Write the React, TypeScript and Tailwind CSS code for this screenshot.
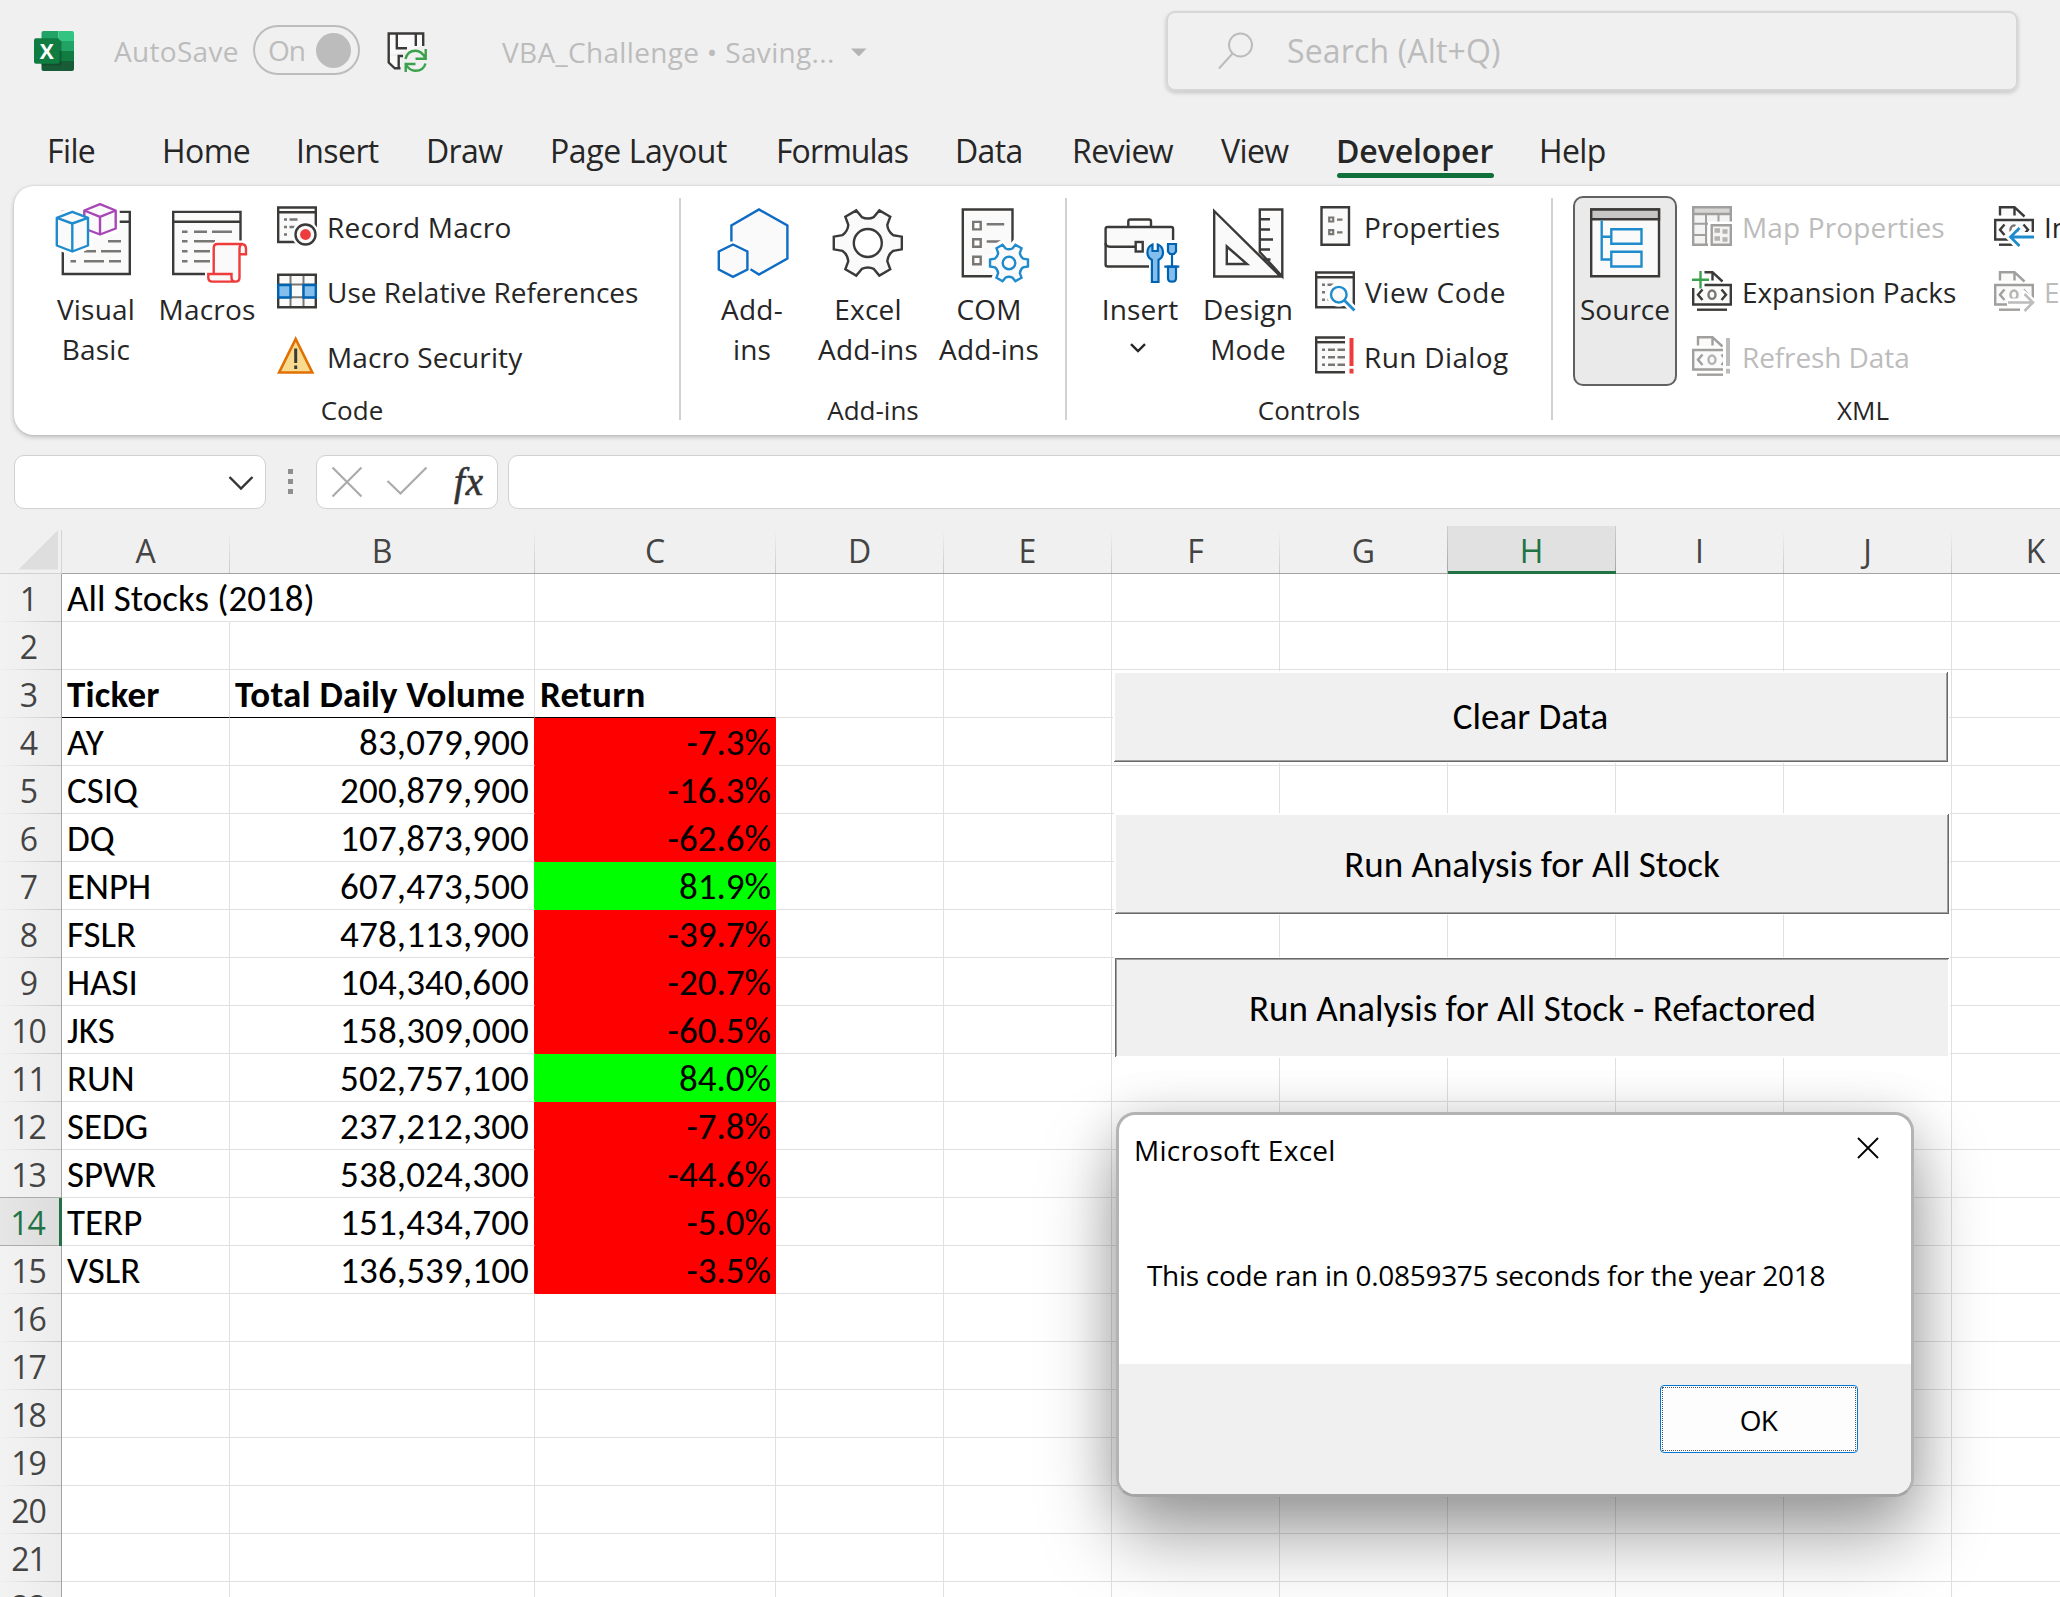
import React from "react";

const INK = "#3b3a39";
const GRAY = "#797774";
const BLUE = "#1e8bcd";
const DEEP = "#0063b1";
const SKY = "#83beec";
const RED = "#ee3b3b";
const PAPER = "#fafafa";

/* ---------- Ribbon icons ---------- */

type Box = { box: string; children: React.ReactNode };

function BigIcon({ box, children }: Box) {
  return (
    <svg viewBox={box} className="h-[90px] w-full" fill="none" stroke={INK} strokeWidth="2.4">
      {children}
    </svg>
  );
}

function SmallIcon({ box, children }: Box) {
  return (
    <svg viewBox={box} className="h-[65px] w-[54px] shrink-0" fill="none" stroke={INK} strokeWidth="2.4">
      {children}
    </svg>
  );
}

function gearPath(cx: number, cy: number, outer: number) {
  const at = (r: number, deg: number) => {
    const a = (deg * Math.PI) / 180;
    return `${(cx + r * Math.cos(a)).toFixed(2)} ${(cy + r * Math.sin(a)).toFixed(2)}`;
  };
  let d = "";
  for (let i = 0; i < 6; i++) {
    const t = i * 60;
    d += `${i ? "L" : "M"}${at(outer * 0.77, t - 17)} L${at(outer, t - 10.5)} L${at(outer, t + 10.5)} L${at(outer * 0.77, t + 17)} Q${at(outer * 0.67, t + 30)} ${at(outer * 0.77, t + 43)} `;
  }
  return d + "Z";
}

function VisualBasicIcon() {
  return (
    <BigIcon box="46 199 100 90">
      <path d="M62.800 211.900H129.800V274H62.800Z" fill={PAPER} />
      <path d="M62.800 221.800H129.800" />
      <path d="M108 241.300h13M84 251.300h12M101 251.300h20M70.500 261.300h5.500M84 261.300h20M109 261.300h12" stroke={GRAY} />
      <g stroke="#fff" strokeWidth="8" fill="#fff">
        <path d="M100 204.200L115.700 210.500V229L100 235L84.300 229V210.500Z" />
        <path d="M72.300 211.500L88 217.500V245.500L72.300 251.500L56.600 245.500V217.500Z" />
      </g>
      <g strokeWidth="2.4" strokeLinejoin="round">
        <path d="M100 204.200L115.700 210.500V228.500L100 234.500L84.300 228.500V210.500Z" fill={PAPER} stroke="#a846b8" />
        <path d="M84.300 210.500L100 216.800L115.700 210.500M100 216.800V234.500" stroke="#a846b8" />
        <path d="M72.300 211.800L88 217.800V245.500L72.300 251.500L56.800 245.500V217.800Z" fill={PAPER} stroke={BLUE} />
        <path d="M56.800 217.800L72.300 223.500L88 217.800M72.300 223.500V251.500" stroke={BLUE} />
      </g>
    </BigIcon>
  );
}

function MacrosIcon() {
  return (
    <BigIcon box="157 199 100 90">
      <path d="M173.200 211.900H240.500V274H173.200Z" fill={PAPER} />
      <path d="M173.200 221.800H240.500" />
      <path d="M182 231.700h5.500M194 231.700h13M212 231.700h20M182 241.300h5.500M194 241.300h21M182 251.300h5.500M194 251.300h16M182 261.300h5.500M194 261.300h16" stroke={GRAY} />
      <path d="M216 240.500H246V256H243V285H205V271H210.500V246Z" fill="#fff" stroke="none" />
      <path d="M213.700 274V248Q213.700 244 217.500 244H241.500Q246 244 246 249V254.200H239.500V277.500Q239.500 281.600 235.500 281.600H212.500Q208.300 281.600 208.300 277.500V274H231.500V277.500Q231.500 281.600 235.500 281.600M239.500 254V249Q239.500 244 243 244" fill={PAPER} stroke={RED} />
    </BigIcon>
  );
}

function AddInsIcon() {
  return (
    <BigIcon box="696 199 112 90">
      <path d="M731.400 242V225.500L759 209.500L787.400 225.500V258.500L759 274.500L750.500 269.500V249L733 240Z" fill={PAPER} stroke="none" />
      <path d="M731.400 241.500V225.500L759 209.500L787.400 225.500V258.500L759 274.500L750.500 269.300" stroke="#0f6cc4" />
      <path d="M733 244.500L747.400 251.500V269.500L733 276.800L718.800 269.500V251.500Z" fill={PAPER} stroke="#0f6cc4" />
    </BigIcon>
  );
}

function ExcelAddInsIcon() {
  return (
    <BigIcon box="808 199 120 90">
      <path d={gearPath(867.8, 243, 34.6)} fill={PAPER} />
      <circle cx="867.800" cy="243" r="14" fill="#fff" />
    </BigIcon>
  );
}

function ComAddInsIcon() {
  return (
    <BigIcon box="929 199 120 90">
      <path d="M962.800 209.500H1012.500V276.200H962.800Z" fill={PAPER} />
      <g stroke={GRAY} fill="#fff">
        <path d="M973.200 221.900h7.500v7.500h-7.500zM973.200 239.300h7.500v7.500h-7.500zM973.200 256.800h7.500v7.500h-7.500z" />
        <path d="M986.700 224.200h17.500M986.700 241.500h14" />
      </g>
      <path d={gearPath(1009, 263, 19.5)} fill="#fff" stroke="#fff" strokeWidth="9" />
      <path d={gearPath(1009, 263, 19.3)} fill={PAPER} stroke={BLUE} />
      <circle cx="1009" cy="263" r="6.300" fill="#fff" stroke={BLUE} />
    </BigIcon>
  );
}

function InsertIcon() {
  return (
    <BigIcon box="1090 199 100 90">
      <rect x="1105.600" y="227" width="67.500" height="39.500" rx="2" fill={PAPER} />
      <path d="M1128.300 226.500V221.500Q1128.300 219.500 1130.300 219.500H1149Q1151 219.500 1151 221.500V226.500" />
      <path d="M1105.600 243Q1105.600 246.700 1110 246.700H1135" />
      <path d="M1149 240H1180V285H1149Z" fill="#fff" stroke="none" />
      <rect x="1135.700" y="242" width="7" height="9.500" fill="#fff" />
      <g stroke={DEEP} fill={SKY} strokeWidth="2.200">
        <path d="M1152.500 244.500V251H1157.800V244.500Q1163 246.500 1163 252.500Q1163 257.500 1158.500 260V282H1151.900V260Q1147.400 257.500 1147.400 252.500Q1147.400 246.500 1152.500 244.500Z" />
        <path d="M1168 244h8v7.500l-2 2.500h-4l-2-2.500zM1168 266.700h8v11.500q0 3.500-4 3.500t-4-3.500z" />
        <path d="M1172 254V266.700M1164.300 266.700H1179.300" />
      </g>
    </BigIcon>
  );
}

function DesignModeIcon() {
  return (
    <BigIcon box="1198 199 100 90">
      <path d="M1259.800 209.500H1282.300V276.500L1259.800 252Z" fill={PAPER} />
      <path d="M1260 219.300h10M1260 229.500h10M1260 239.500h13M1260 249.500h10M1262 259.500h8.500" />
      <path d="M1214.200 211V276.500H1280.500Z" fill={PAPER} />
      <path d="M1226.800 246.500V264H1247Z" fill="#fff" />
    </BigIcon>
  );
}

function SourceIcon() {
  return (
    <svg viewBox="1575 198 100 91" className="h-[91px] w-full shrink-0" fill="none" stroke={INK} strokeWidth="2.4">
      <path d="M1591.200 209.500H1659V276.300H1591.200Z" fill={PAPER} />
      <path d="M1591.200 209.500H1659V219.300H1591.200Z" fill="#c8c6c4" />
      <path d="M1601.700 220.500V259.500H1611M1601.700 236.700H1611" stroke={BLUE} />
      <path d="M1611.300 229.300h30.200v14.500h-30.200zM1611.300 251.700h30.200v14.800h-30.200z" stroke={BLUE} fill={PAPER} />
    </svg>
  );
}

function RecordIcon() {
  return (
    <SmallIcon box="272 195 54 65">
      <path d="M278.200 207.500H315.800V242H278.200Z" fill={PAPER} />
      <path d="M278.200 212.300H315.800" />
      <path d="M284 219.500h3M289.500 219.500h8M284 227h3M289.500 227h5M284 234.500h3" stroke={GRAY} />
      <circle cx="305.500" cy="234.500" r="13.500" fill="#fff" stroke="none" />
      <path d="M300 240.500h18v6h-18z" fill="#fff" stroke="none" />
      <circle cx="305.500" cy="234.500" r="10" fill={PAPER} />
      <circle cx="305.500" cy="234.500" r="5.400" fill={RED} stroke="none" />
    </SmallIcon>
  );
}

function RelativeIcon() {
  return (
    <SmallIcon box="272 260 54 65">
      <path d="M278.200 274.700H315.800V307.300H278.200Z" fill={PAPER} stroke="none" />
      <path d="M290.500 274.700V307.300M303.500 274.700V307.300M278.200 284.500H315.800M278.200 297.300H315.800" stroke={GRAY} strokeWidth="2" />
      <path d="M278.200 274.700H315.800V307.300H278.200Z" />
      <path d="M278.200 285h12.300v12.500h-12.300zM303.500 285h12.300v12.500h-12.300z" fill={SKY} stroke={DEEP} />
    </SmallIcon>
  );
}

function SecurityIcon() {
  return (
    <SmallIcon box="272 325 54 65">
      <path d="M295.700 339L312.300 372.500H279.100Z" fill="#f8db8f" stroke="#e07000" strokeWidth="2.600" />
      <path d="M295.700 348.500V363M295.700 365.500V369" strokeWidth="3" />
    </SmallIcon>
  );
}

function PropertiesIcon() {
  return (
    <SmallIcon box="1309 195 54 65">
      <path d="M1321.500 207.200H1349V244.800H1321.500Z" fill={PAPER} />
      <path d="M1329.200 217.500h4v4h-4zM1329.200 230.200h4v4h-4zM1337 219.700h5.500M1337 232.300h5.500" stroke={GRAY} strokeWidth="2.200" />
    </SmallIcon>
  );
}

function ViewCodeIcon() {
  return (
    <SmallIcon box="1309 260 54 65">
      <path d="M1316.200 272.500H1353.800V307.200H1316.200Z" fill={PAPER} />
      <path d="M1316.200 277.300H1353.800" />
      <path d="M1322 284.700h3M1327.500 284.700h6M1322 292.300h3M1322 299.700h3M1327.500 299.700h2" stroke={GRAY} />
      <circle cx="1338.800" cy="294.700" r="12" fill="#fff" stroke="none" />
      <path d="M1344 300L1356 312" stroke="#fff" strokeWidth="8" />
      <circle cx="1338.800" cy="294.700" r="7.800" fill={PAPER} stroke={BLUE} />
      <path d="M1344.300 300.300L1354.500 310.500" stroke={BLUE} strokeWidth="2.800" />
    </SmallIcon>
  );
}

function RunDialogIcon() {
  return (
    <SmallIcon box="1309 325 54 65">
      <path d="M1345 337.500H1316.200V372.200H1345" fill={PAPER} />
      <path d="M1316.200 342.200H1345" />
      <path d="M1322 349.700h3M1328 349.700h7M1337.500 349.700h7.500M1322 357.300h3M1328 357.300h7M1337.500 357.300h7.500M1322 364.800h3M1328 364.800h7M1337.500 364.800h7.500" stroke={GRAY} />
      <path d="M1351.500 338V366M1351.500 368.700V373.500" stroke={RED} strokeWidth="4" />
    </SmallIcon>
  );
}

function MapPropertiesIcon() {
  return (
    <SmallIcon box="1687 195 54 65">
      <g stroke="#a19f9d">
        <path d="M1693.200 207.200H1730.800V244.800H1693.200Z" fill="#f3f3f3" />
        <path d="M1693.200 207.200H1730.800V214H1693.200Z" fill="#d6d6d6" />
        <path d="M1706 214V245M1718.500 214V224M1693.200 223.700H1731M1693.200 235H1706" strokeWidth="2" />
      </g>
      <path d="M1708 221.500h26v26h-26z" fill="#fff" stroke="none" />
      <path d="M1711.700 225.200H1730.800V244.800H1711.700Z" stroke="#a19f9d" fill="#f3f3f3" />
      <path d="M1714.500 230.500h5.500M1722.500 231.500h5M1714.500 238.500h5.500M1722.500 239.500h5" stroke="#b5b3b1" strokeWidth="4.500" />
    </SmallIcon>
  );
}

type XmlProps = { box: string; x: number; y: number; ink: string; soft: string; children?: React.ReactNode };

function XmlDocIcon({ box, x, y, ink, soft, children }: XmlProps) {
  return (
    <SmallIcon box={box}>
      <g transform={`translate(${x} ${y})`} stroke={ink}>
        <path d="M6 9.500V1.200H20.500L30.500 10.500M20.500 1.200V9.500" fill={PAPER} />
        <path d="M1.200 14H38.800V33.500H1.200Z" fill={PAPER} />
        <path d="M5 38.700H35" />
        <path d="M10.500 18.500L6 23.700L10.500 29M29.500 18.500L34 23.700L29.500 29" />
        <ellipse cx="20" cy="23.700" rx="3.500" ry="4.200" stroke={soft} />
        {children}
      </g>
    </SmallIcon>
  );
}

/* ---------- Ribbon building blocks ---------- */

function BigButton({ width, icon, children }: { width: string; icon: React.ReactNode; children: React.ReactNode }) {
  return (
    <div className={`flex flex-col items-center pt-[13px] text-center text-[28px] leading-[40px] tracking-[0.2px] whitespace-nowrap ${width}`}>
      {icon}
      {children}
    </div>
  );
}

type SmallButtonProps = { icon: React.ReactNode; label: string; muted?: boolean; tracking?: string };

function SmallButton({ icon, label, muted, tracking = "tracking-[0.05px]" }: SmallButtonProps) {
  return (
    <div className={`flex h-[65px] text-[28px] leading-[65px] whitespace-nowrap ${muted ? "text-[#bcbcbc]" : ""}`}>
      {icon}
      <span className={`pl-px ${tracking}`}>{label}</span>
    </div>
  );
}

function Group({ width, label, pad = "", children }: { width: string; label: string; pad?: string; children: React.ReactNode }) {
  return (
    <section className={`flex shrink-0 flex-col ${width}`}>
      <div className="flex h-[208px] items-start">{children}</div>
      <div className={`h-[30px] text-center text-[26px] leading-[32px] ${pad}`}>{label}</div>
    </section>
  );
}

function Divider() {
  return <div className="mt-3 h-[222px] w-[2px] shrink-0 bg-[#d1d1d1]" />;
}

/* ---------- Title bar and tabs ---------- */

function TitleBar() {
  return (
    <header className="flex h-[100px] text-[28px] text-[#bcbcbc]">
      <svg viewBox="30 26 48 50" className="mt-[26px] ml-[30px] h-[50px] w-[48px]">
        <path d="M43.500 31H58.500V41H41.500V33Q41.500 31 43.500 31Z" fill="#21a366" />
        <path d="M58.500 31H72Q74 31 74 33V41H58.500Z" fill="#33c481" />
        <path d="M41.500 41H58.500V51H41.500Z" fill="#107c41" />
        <path d="M58.500 41H74V51H58.500Z" fill="#21a366" />
        <path d="M41.500 51H58.500V61H41.500Z" fill="#185c37" />
        <path d="M58.500 51H74V61H58.500Z" fill="#107c41" />
        <path d="M41.500 61H74V69Q74 71 72 71H43.500Q41.500 71 41.500 69Z" fill="#185c37" />
        <path d="M41.500 40H59.500Q61.500 40 61.500 42V63.500Q61.500 65.500 59.500 65.500H41.500Z" fill="#0b3d22" opacity=".45" />
        <rect x="34" y="38.300" width="25.500" height="25.400" rx="2" fill="#107c41" />
        <text x="46.700" y="59" textAnchor="middle" className="fill-white font-['Open_Sans'] text-[21px] font-bold">X</text>
      </svg>
      <span className="ml-[36px] w-[139px] leading-[102px] tracking-[0.3px]">AutoSave</span>
      <div className="mt-[25px] flex h-[50px] w-[107px] items-center rounded-full border-2 border-[#bcbcbc] pr-[5px] pl-[13px]">
        <span className="w-[48px] leading-[48px] tracking-[-1px]">On</span>
        <span className="size-[35px] shrink-0 rounded-full bg-[#bcbcbc]" />
      </div>
      <svg viewBox="382 26 50 50" className="mt-[26px] ml-[22px] h-[50px] w-[50px]" fill="none" stroke={INK} strokeWidth="2.4">
        <path d="M423 46V33.500H388.500V62.500L394.500 68.500H400.500V56H388.500Z" fill={PAPER} stroke="none" />
        <path d="M423.200 46V33.500H388.700V62.500L394.800 68.300H400.500" />
        <path d="M396.800 33.500V48.200H407M415.800 33.500V46M398.700 68V56H403" />
        <g stroke="#3aa14c">
          <path d="M405.500 59Q407.500 50.800 415.500 50.800Q421.500 50.800 425.800 58.500M425.700 49V58.800H415.500" />
          <path d="M425.500 63.500Q423.500 70.800 415.500 70.800Q409.500 70.800 405.800 64.500M405.700 72V64H415.500" />
        </g>
      </svg>
      <span className="ml-[70px] leading-[104px] tracking-[0.32px] whitespace-nowrap">VBA_Challenge • Saving...</span>
      <svg viewBox="0 0 16 9" className="mt-[48px] ml-[16px] h-[9px] w-[16px] shrink-0">
        <path d="M0 0.500H15.500L7.800 8.500Z" fill="#b4b4b4" />
      </svg>
      <div className="mt-[11px] mr-[42px] ml-auto flex h-[80px] w-[852px] rounded-[9px] border-2 border-[#d6d6d6] shadow-[0_2px_4px_rgba(0,0,0,0.18)]">
        <svg viewBox="0 0 36 38" className="mt-[19px] ml-[50px] h-[38px] w-[36px]" fill="none" stroke="#bcbcbc" strokeWidth="2">
          <circle cx="22.500" cy="13" r="11.500" />
          <path d="M14.500 21.500L1 36.500" />
        </svg>
        <span className="ml-[33px] text-[32px] leading-[75px] tracking-[0.15px]">Search (Alt+Q)</span>
      </div>
    </header>
  );
}

const tabs: [string, string][] = [
  ["File", "w-[115px]"],
  ["Home", "w-[134px]"],
  ["Insert", "w-[130px]"],
  ["Draw", "w-[124px]"],
  ["Page Layout", "w-[226px] tracking-[-0.4px]"],
  ["Formulas", "w-[179px] tracking-[-0.9px]"],
  ["Data", "w-[117px]"],
  ["Review", "w-[149px]"],
  ["View", "w-[115px]"],
  ["Developer", "w-[203px]"],
  ["Help", "w-[100px]"],
];

function Tabs() {
  return (
    <nav className="flex h-[86px] pl-[47px] text-[32px] leading-[101px] tracking-[-0.6px]">
      {tabs.map(([name, width]) =>
        name === "Developer" ? (
          <div key={name} className={`flex flex-col ${width}`}>
            <span className="h-[73px] font-semibold tracking-[-0.1px]">{name}</span>
            <span className="ml-px h-[5px] w-[157px] rounded-full bg-[#0f703b]" />
          </div>
        ) : (
          <span key={name} className={`whitespace-nowrap ${width}`}>{name}</span>
        )
      )}
    </nav>
  );
}

/* ---------- Ribbon ---------- */

function Ribbon() {
  const dim = "#a19f9d";
  return (
    <div className="ml-[14px] flex h-[249px] w-[2160px] rounded-[20px] bg-white shadow-[0_2px_5px_rgba(0,0,0,0.22),0_0_3px_rgba(0,0,0,0.1)]">
      <Group width="w-[665px]" label="Code" pad="pl-[11px]">
        <div className="w-8" />
        <BigButton width="w-[100px]" icon={<VisualBasicIcon />}><span>Visual<br />Basic</span></BigButton>
        <div className="w-[11px]" />
        <BigButton width="w-[100px]" icon={<MacrosIcon />}><span>Macros</span></BigButton>
        <div className="mt-[9px] ml-[15px]">
          <SmallButton icon={<RecordIcon />} label="Record Macro" tracking="tracking-[0.25px]" />
          <SmallButton icon={<RelativeIcon />} label="Use Relative References" tracking="tracking-[0px]" />
          <SmallButton icon={<SecurityIcon />} label="Macro Security" tracking="tracking-[0.1px]" />
        </div>
      </Group>
      <Divider />
      <Group width="w-[384px]" label="Add-ins">
        <div className="w-[15px]" />
        <BigButton width="w-[112px]" icon={<AddInsIcon />}><span>Add-<br />ins</span></BigButton>
        <BigButton width="w-[120px]" icon={<ExcelAddInsIcon />}><span>Excel<br />Add-ins</span></BigButton>
        <div className="w-px" />
        <BigButton width="w-[120px]" icon={<ComAddInsIcon />}><span>COM<br />Add-ins</span></BigButton>
      </Group>
      <Divider />
      <Group width="w-[484px]" label="Controls">
        <div className="w-[23px]" />
        <BigButton width="w-[100px]" icon={<InsertIcon />}>
          <span>Insert</span>
          <svg viewBox="0 0 16 10" className="mt-[14px] mr-[4px] h-[10px] w-[16px]" fill="none" stroke="#262626" strokeWidth="2.4">
            <path d="M1 1.200L8 8L15 1.200" />
          </svg>
        </BigButton>
        <div className="w-2" />
        <BigButton width="w-[100px]" icon={<DesignModeIcon />}><span>Design<br />Mode</span></BigButton>
        <div className="mt-[9px] ml-[11px]">
          <SmallButton icon={<PropertiesIcon />} label="Properties" />
          <SmallButton icon={<ViewCodeIcon />} label="View Code" tracking="ml-px tracking-[0.6px]" />
          <SmallButton icon={<RunDialogIcon />} label="Run Dialog" tracking="tracking-[0.35px]" />
        </div>
      </Group>
      <Divider />
      <Group width="w-[620px]" label="XML">
        <div className="mt-[10px] ml-[20px] flex h-[190px] w-[104px] flex-col items-center rounded-[10px] border-2 border-[#616161] bg-[#eaeaea] text-[28px] leading-[40px]">
          <SourceIcon />
          <span>Source</span>
        </div>
        <div className="mt-[9px] ml-[10px] w-[302px]">
          <SmallButton muted icon={<MapPropertiesIcon />} label="Map Properties" tracking="tracking-[0.15px]" />
          <SmallButton
            label="Expansion Packs"
            tracking="tracking-[-0.1px]"
            icon={
              <XmlDocIcon box="1687 260 54 65" x={1692} y={271} ink={INK} soft={GRAY}>
                <path d="M-2 -2H12.500V17H-2Z" fill="#fff" stroke="none" />
                <path d="M8.500 0V17.500M0 8.700H17" stroke="#3aa14c" />
              </XmlDocIcon>
            }
          />
          <SmallButton
            muted
            label="Refresh Data"
            tracking="tracking-[-0.1px]"
            icon={
              <XmlDocIcon box="1687 325 54 65" x={1692} y={336} ink={dim} soft="#b5b3b1">
                <path d="M31 -1H41V41H31Z" fill="#fff" stroke="none" />
                <path d="M36 2V30M36 32.700V37.500" stroke="#bcbcbc" strokeWidth="4" />
              </XmlDocIcon>
            }
          />
        </div>
        <div className="mt-[9px]">
          <SmallButton
            label="Import"
            icon={
              <XmlDocIcon box="1989 195 54 65" x={1994} y={206} ink={INK} soft={GRAY}>
                <path d="M11 31L24 17V26H41V36H38V41H20Z" fill="#fff" stroke="none" />
                <path d="M40 31H17M25.500 22L16.500 31L25.500 40" stroke={BLUE} strokeWidth="2.800" />
              </XmlDocIcon>
            }
          />
          <SmallButton
            muted
            label="Export"
            icon={
              <XmlDocIcon box="1989 260 54 65" x={1994} y={271} ink={dim} soft="#b5b3b1">
                <path d="M13 27.500H27L29 18L41 28V41H26V35H13Z" fill="#fff" stroke="none" />
                <path d="M14 31.500H38.500M30.500 23L39 31.500L30.500 40" stroke="#bcbcbc" strokeWidth="2.600" />
              </XmlDocIcon>
            }
          />
        </div>
      </Group>
    </div>
  );
}

function FormulaBar() {
  return (
    <div className="flex h-[91px] w-[2200px] pt-[20px] pl-[14px]">
      <div className="flex h-[54px] w-[252px] shrink-0 justify-end rounded-[10px] border border-[#d1d1d1] bg-white pt-[20px] pr-[11px]">
        <svg viewBox="0 0 26 15" className="h-[15px] w-[26px]" fill="none" stroke="#333" strokeWidth="2.4">
          <path d="M1.500 1L13 12.500L24.500 1" />
        </svg>
      </div>
      <div className="mt-[14px] ml-[22px] flex shrink-0 flex-col gap-[5px]">
        <span className="size-[5px] bg-[#8f8f8f]" />
        <span className="size-[5px] bg-[#8f8f8f]" />
        <span className="size-[5px] bg-[#8f8f8f]" />
      </div>
      <div className="ml-[23px] flex h-[54px] w-[182px] shrink-0 rounded-[10px] border border-[#d1d1d1] bg-white">
        <svg viewBox="317 456 120 52" className="h-[52px] w-[120px] shrink-0" fill="none" stroke="#ababab" strokeWidth="2.2">
          <path d="M332.500 467.500L361.500 496.500M361.500 467.500L332.500 496.500M387.500 481L400.500 493.500L426.500 467.500" />
        </svg>
        <span className="ml-[17px] font-['Liberation_Serif'] text-[39px] leading-[51px] tracking-[1px] text-[#333] italic [-webkit-text-stroke:0.6px_#333]">fx</span>
      </div>
      <div className="ml-[10px] h-[54px] grow rounded-[10px] border border-[#d1d1d1] bg-white" />
    </div>
  );
}

/* ---------- Worksheet ---------- */

const columns: [string, string][] = [
  ["A", "w-[168px]"],
  ["B", "w-[305px]"],
  ["C", "w-[241px]"],
  ["D", "w-[168px]"],
  ["E", "w-[168px]"],
  ["F", "w-[168px]"],
  ["G", "w-[168px]"],
  ["H", "w-[168px]"],
  ["I", "w-[168px]"],
  ["J", "w-[168px]"],
  ["K", "w-[168px]"],
];

const data: Record<number, [string, string, string]> = {
  1: ["All Stocks (2018)", "", ""],
  3: ["Ticker", "Total Daily Volume", "Return"],
  4: ["AY", "83,079,900", "-7.3%"],
  5: ["CSIQ", "200,879,900", "-16.3%"],
  6: ["DQ", "107,873,900", "-62.6%"],
  7: ["ENPH", "607,473,500", "81.9%"],
  8: ["FSLR", "478,113,900", "-39.7%"],
  9: ["HASI", "104,340,600", "-20.7%"],
  10: ["JKS", "158,309,000", "-60.5%"],
  11: ["RUN", "502,757,100", "84.0%"],
  12: ["SEDG", "237,212,300", "-7.8%"],
  13: ["SPWR", "538,024,300", "-44.6%"],
  14: ["TERP", "151,434,700", "-5.0%"],
  15: ["VSLR", "136,539,100", "-3.5%"],
};

function ColumnHeaders() {
  return (
    <div className="flex h-[48px] text-[32px] leading-[49px] text-[#444]">
      <div className="flex w-[62px] shrink-0 flex-col">
        <svg viewBox="0 0 62 47" className="h-[47px] w-[62px]">
          <path d="M58 4V43.500H18.500Z" fill="#dedede" />
          <path d="M61.500 4V47" stroke="#d4d4d4" />
        </svg>
        <span className="h-px bg-[#d0d0d0]" />
      </div>
      {columns.map(([name, width]) => {
        const on = name === "H";
        return (
          <div key={name} className={`flex shrink-0 flex-col ${width}`}>
            <div className={on ? "flex h-[45px] bg-[#e1e1e1] text-[#217346]" : "flex h-[47px]"}>
              <span className="grow text-center">{name}</span>
              <span className={on || name === "G" ? "w-px bg-linear-to-b from-[#cfcfcf] to-[#a6a6a6]" : "mt-[4px] w-px bg-linear-to-b from-[#f0f0f0] to-[#cacaca]"} />
            </div>
            <span className={on ? "h-[3px] bg-[#217346]" : "h-px bg-[#a3a3a3]"} />
          </div>
        );
      })}
    </div>
  );
}

function SheetRow({ n }: { n: number }) {
  const values = data[n];
  const on = n === 14;
  const filled = n >= 4 && n <= 15;
  const positive = n === 7 || n === 11;
  return (
    <div className="flex h-[48px]">
      <div className={`flex w-[62px] shrink-0 text-[32px] leading-[50px] tracking-[-1px] ${on ? "bg-linear-to-r from-[#e6e6e6] to-[#dcdcdc] text-[#217346]" : "bg-linear-to-r from-[#f2f2f2] to-[#ededed] text-[#444]"}`}>
        <div className="flex grow flex-col">
          <span className="h-[47px] pr-[4px] text-center">{n}</span>
          <span className={on || n === 13 ? "h-px bg-[#ababab]" : "h-px bg-linear-to-r from-[#f0f0f0] to-[#c8c8c8]"} />
        </div>
        <span className={on ? "w-[3px] bg-[#217346]" : "w-px bg-[#a3a3a3]"} />
      </div>
      {columns.map(([name, width], i) => {
        const text = values && i < 3 ? values[i] : "";
        const isC = i === 2 && filled;
        const fill = isC ? (positive ? "bg-[#00ff00]" : "bg-[#ff0000]") : "";
        const right = (isC || i === 1) && filled
          ? (positive ? "border-r-[#00ff00]" : "border-r-[#ff0000]")
          : n === 1 && i === 0 ? "border-r-transparent" : "border-r-[#e0e0e0]";
        const bottom = n === 3 && i < 3 ? "border-b-black" : isC ? (positive ? "border-b-[#00ff00]" : "border-b-[#ff0000]") : "border-b-[#e0e0e0]";
        const style = n === 3 ? "font-bold tracking-[0.2px]" : i === 1 ? "tracking-[0.15px]" : "";
        const align = filled && i === 1 ? "text-right pr-[5px]" : filled && i === 2 ? "text-right pr-[4px]" : "";
        return (
          <div key={name} className={`shrink-0 border-r border-b pl-[5px] font-['Carlito','Lato',sans-serif] text-[37px] leading-[50px] whitespace-nowrap text-black ${width} ${fill} ${right} ${bottom} ${style} ${align}`}>
            {text}
          </div>
        );
      })}
    </div>
  );
}

function SheetButton({ place, label, pressed }: { place: string; label: string; pressed?: boolean }) {
  return (
    <button
      className={`absolute flex items-center justify-center bg-[#f0f0f0] font-['Carlito','Lato',sans-serif] text-[37px] text-black outline-1 outline-white ${place} ${
        pressed
          ? "shadow-[inset_1px_1px_0_#696969,inset_-1px_-1px_0_#fff,inset_2px_2px_0_#a0a0a0]"
          : "shadow-[inset_-1px_-1px_0_#696969,inset_1px_1px_0_#fff,inset_-2px_-2px_0_#a0a0a0]"
      }`}
    >
      {label}
    </button>
  );
}

function MessageBox() {
  return (
    <div className="absolute top-[586px] left-[1116px] flex h-[385px] w-[798px] flex-col overflow-hidden rounded-[19px] border-[3px] border-[#b3b3b3] border-b-[#a5a5a5] bg-white text-[28px] text-black shadow-[0_40px_76px_rgba(0,0,0,0.36),0_4px_50px_rgba(0,0,0,0.14)]">
      <div className="flex h-[74px] justify-between pr-[32px] pl-[15px]">
        <span className="leading-[70px] tracking-[0.3px]">Microsoft Excel</span>
        <svg viewBox="0 0 22 22" className="mt-[22px] h-[22px] w-[22px]" fill="none" stroke="#000" strokeWidth="1.8">
          <path d="M1 1L21 21M21 1L1 21" />
        </svg>
      </div>
      <div className="h-[175px] pl-[28px] leading-[173px] tracking-[-0.3px] whitespace-nowrap">
        This code ran in 0.0859375 seconds for the year 2018
      </div>
      <div className="flex grow items-start justify-end bg-[#f0f0f0] pt-[21px] pr-[53px]">
        <button className="h-[68px] w-[198px] rounded-[4px] border-[1.5px] border-[#0078d4] bg-[#fdfdfd] p-px">
          <span className="block h-full border border-dotted border-[#555] pr-px leading-[65px] tracking-[-0.8px]">OK</span>
        </button>
      </div>
    </div>
  );
}

export default function App() {
  return (
    <div className="h-[1597px] w-[2060px] overflow-hidden bg-[#f0f0f0] font-['Open_Sans','Noto_Sans',sans-serif] text-[#262626]">
      <TitleBar />
      <Tabs />
      <Ribbon />
      <FormulaBar />
      <main className="relative h-[1071px] overflow-hidden">
        <ColumnHeaders />
        <div className="bg-white">
          {Array.from({ length: 22 }, (_, i) => (
            <SheetRow key={i} n={i + 1} />
          ))}
        </div>
        <SheetButton place="top-[146px] left-[1114px] h-[90px] w-[834px] pr-px" label="Clear Data" />
        <SheetButton place="top-[288px] left-[1115px] h-[100px] w-[834px] pt-[2px]" label="Run Analysis for All Stock" />
        <SheetButton place="top-[432px] left-[1115px] h-[99px] w-[834px] pt-[3px] pl-px" label="Run Analysis for All Stock - Refactored" pressed />
        <MessageBox />
      </main>
    </div>
  );
}
